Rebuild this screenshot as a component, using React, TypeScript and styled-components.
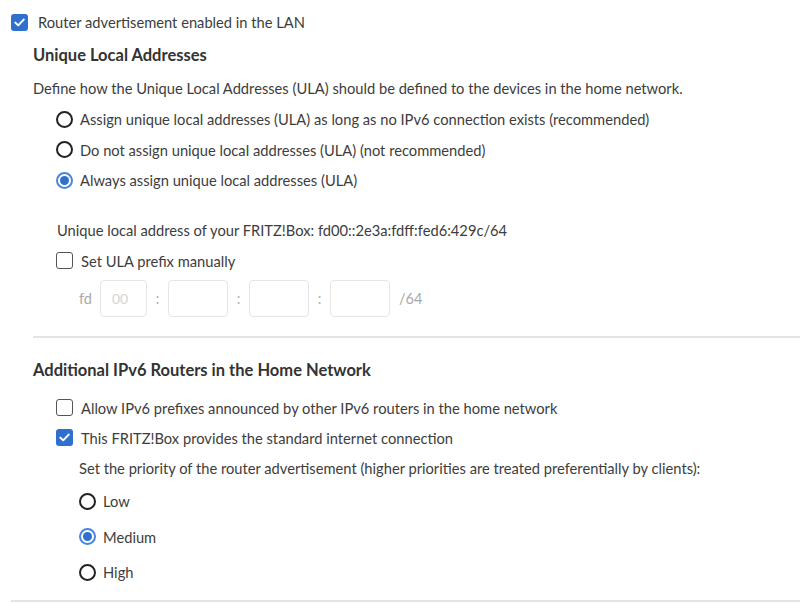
import React from "react";
import styled, { createGlobalStyle } from "styled-components";

const Global = createGlobalStyle`
  html, body { margin: 0; padding: 0; background: #fff; }
  body {
    font-family: Lato, "Noto Sans", "Liberation Sans", sans-serif;
    font-size: 14.7px;
    color: #3d3d3d;
  }
`;

const Page = styled.div`
  width: 800px;
  height: 604px;
  overflow: hidden;
  padding: 7px 0 0 11px;
  box-sizing: border-box;
  display: flex;
  flex-direction: column;
`;

const Row = styled.label<{ $h?: number; $indent?: number; $mt?: number; $gap?: number }>`
  display: flex;
  align-items: center;
  gap: ${(p) => p.$gap ?? 7}px;
  height: ${(p) => p.$h ?? 30}px;
  margin-left: ${(p) => p.$indent ?? 0}px;
  margin-top: ${(p) => p.$mt ?? 0}px;
  white-space: nowrap;
`;

const Section = styled.div`
  margin-left: 22px;
  display: flex;
  flex-direction: column;
`;

const Heading = styled.div<{ $mt?: number }>`
  height: 30px;
  display: flex;
  align-items: center;
  margin-top: ${(p) => p.$mt ?? 0}px;
  font-size: 16.5px;
  font-weight: 700;
  color: #333;
`;

const Text = styled.div<{ $indent?: number; $mt?: number }>`
  height: 30px;
  display: flex;
  align-items: center;
  margin-left: ${(p) => p.$indent ?? 0}px;
  margin-top: ${(p) => p.$mt ?? 0}px;
  white-space: nowrap;
`;

const Box = styled.span<{ $checked?: boolean }>`
  width: 17px;
  height: 17px;
  box-sizing: border-box;
  border-radius: 3px;
  flex: none;
  display: flex;
  align-items: center;
  justify-content: center;
  background: ${(p) => (p.$checked ? "#2f6fcd" : "#fff")};
  border: ${(p) => (p.$checked ? "none" : "1.5px solid #555")};
`;

const Radio = styled.span<{ $checked?: boolean }>`
  width: 17px;
  height: 17px;
  box-sizing: border-box;
  border-radius: 50%;
  flex: none;
  display: flex;
  align-items: center;
  justify-content: center;
  border: 2px solid ${(p) => (p.$checked ? "#4a86da" : "#222")};
  &::after {
    content: "";
    display: ${(p) => (p.$checked ? "block" : "none")};
    width: 9px;
    height: 9px;
    border-radius: 50%;
    background: #2f6fcd;
  }
`;

const InputRow = styled.div`
  display: flex;
  align-items: center;
  height: 37px;
  margin-top: 4px;
  margin-left: 46px;
  color: #a8a8a8;
  font-size: 14.5px;
`;

const Prefix = styled.span`
  width: 21px;
`;

const Sep = styled.span`
  width: 21px;
  text-align: center;
  color: #b0b0b0;
`;

const Field = styled.div<{ $w: number }>`
  width: ${(p) => p.$w}px;
  height: 37px;
  box-sizing: border-box;
  border: 1px solid #e6e6e6;
  border-radius: 4px;
  display: flex;
  align-items: center;
  padding-left: 11px;
  color: #d4d4d4;
  font-size: 14px;
`;

const Suffix = styled.span`
  margin-left: 9px;
`;

const Divider = styled.div<{ $mt: number; $ml?: number }>`
  height: 2px;
  background: #e4e4e4;
  margin-top: ${(p) => p.$mt}px;
  margin-left: ${(p) => p.$ml ?? 0}px;
`;

const Check = () => (
  <svg width="11" height="9" viewBox="0 0 11 9">
    <path d="M1.3 4.6 L4.2 7.4 L9.7 1.6" fill="none" stroke="#fff" strokeWidth="2" strokeLinecap="round" strokeLinejoin="round" />
  </svg>
);

export default function App() {
  return (
    <>
      <Global />
      <Page>
        <Row $gap={10}>
          <Box $checked>
            <Check />
          </Box>
          Router advertisement enabled in the LAN
        </Row>
        <Section>
          <Heading $mt={3}>Unique Local Addresses</Heading>
          <Text $mt={3}>
            Define how the Unique Local Addresses (ULA) should be defined to the devices in the home network.
          </Text>
          <Row $indent={23} $mt={1} $h={30.5}>
            <Radio />
            Assign unique local addresses (ULA) as long as no IPv6 connection exists (recommended)
          </Row>
          <Row $indent={23} $h={30.5}>
            <Radio />
            Do not assign unique local addresses (ULA) (not recommended)
          </Row>
          <Row $indent={23} $h={30.5}>
            <Radio $checked />
            Always assign unique local addresses (ULA)
          </Row>
          <Text $indent={24} $mt={19}>
            Unique local address of your FRITZ!Box: fd00::2e3a:fdff:fed6:429c/64
          </Text>
          <Row $indent={23} $mt={1} $gap={8}>
            <Box />
            Set ULA prefix manually
          </Row>
          <InputRow>
            <Prefix>fd</Prefix>
            <Field $w={47}>00</Field>
            <Sep>:</Sep>
            <Field $w={60} />
            <Sep>:</Sep>
            <Field $w={60} />
            <Sep>:</Sep>
            <Field $w={60} />
            <Suffix>/64</Suffix>
          </InputRow>
        </Section>
        <Divider $mt={19} $ml={22} />
        <Section>
          <Heading $mt={17}>Additional IPv6 Routers in the Home Network</Heading>
          <Row $indent={23} $mt={8} $gap={8}>
            <Box />
            Allow IPv6 prefixes announced by other IPv6 routers in the home network
          </Row>
          <Row $indent={23} $gap={8}>
            <Box $checked>
              <Check />
            </Box>
            This FRITZ!Box provides the standard internet connection
          </Row>
          <Text $indent={46}>
            Set the priority of the router advertisement (higher priorities are treated preferentially by clients):
          </Text>
          <Row $indent={46} $h={35.5} $mt={1}>
            <Radio />
            Low
          </Row>
          <Row $indent={46} $h={35.5}>
            <Radio $checked />
            Medium
          </Row>
          <Row $indent={46} $h={35.5}>
            <Radio />
            High
          </Row>
        </Section>
        <Divider $mt={10} />
      </Page>
    </>
  );
}
